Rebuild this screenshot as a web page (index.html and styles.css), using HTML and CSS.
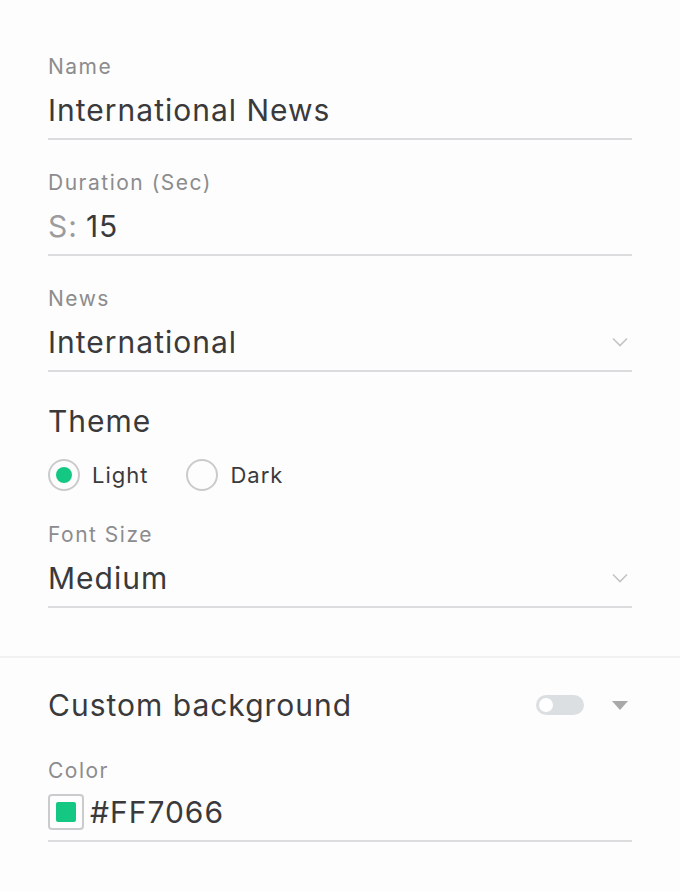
FILE: index.html
```html
<!doctype html>
<html>

<head>
    <title>Widget settings</title>
    <meta charset="utf-8">
    <link rel="stylesheet" href="styles.css">
</head>

<body>
    <section class="panel">
        <div class="field">
            <div class="label">Name</div>
            <div class="value">International News</div>
        </div>
        <div class="field">
            <div class="label">Duration (Sec)</div>
            <div class="value"><span class="prefix">S:</span>15</div>
        </div>
        <div class="field">
            <div class="label">News</div>
            <div class="value select">
                <span>International</span>
                <svg class="chevron" width="16" height="10" viewBox="0 0 16 10">
                    <path d="M1 1.5 L8 8.5 L15 1.5" fill="none" stroke="#c4c4c6" stroke-width="1.6"/>
                </svg>
            </div>
        </div>

        <div class="heading">Theme</div>
        <div class="radios">
            <label class="radio"><span class="dot on"></span>Light</label>
            <label class="radio"><span class="dot"></span>Dark</label>
        </div>

        <div class="field">
            <div class="label">Font Size</div>
            <div class="value select">
                <span>Medium</span>
                <svg class="chevron" width="16" height="10" viewBox="0 0 16 10">
                    <path d="M1 1.5 L8 8.5 L15 1.5" fill="none" stroke="#c4c4c6" stroke-width="1.6"/>
                </svg>
            </div>
        </div>
    </section>

    <div class="divider"></div>

    <section class="panel">
        <div class="heading custom">
            <span>Custom background</span>
            <div class="tools">
                <span class="toggle"><span class="knob"></span></span>
                <span class="caret"></span>
            </div>
        </div>
        <div class="field color">
            <div class="label">Color</div>
            <div class="value"><span class="swatch"><span></span></span>#FF7066</div>
        </div>
    </section>
</body>

</html>
```

FILE: styles.css
```css
body {
    margin: 0;
    background-color: #fdfdfd;
    font-family: Inter, "Noto Sans", sans-serif;
    color: #3a3a3c;
}

.panel {
    padding: 24px 48px 0 48px;
}

.field {
    margin-top: 31px;
    border-bottom: 2px solid #dcdcde;
    padding-bottom: 8px;
}

.radios + .field {
    margin-top: 32px;
}

.field.color {
    margin-top: 34px;
}

.label {
    font-size: 21px;
    line-height: 24px;
    letter-spacing: 1.5px;
    color: #8c8c8e;
}

.value {
    margin-top: 11px;
    font-size: 30px;
    line-height: 40px;
    letter-spacing: 1px;
    display: flex;
    align-items: center;
}

.field.color .value {
    margin-top: 9px;
}

.prefix {
    color: #9c9c9e;
    margin-right: 8px;
}

.select {
    justify-content: space-between;
}

.chevron {
    margin-right: 4px;
}

.heading {
    margin-top: 29px;
    font-size: 30px;
    line-height: 40px;
    letter-spacing: 1px;
}

.radios {
    margin-top: 18px;
    display: flex;
    gap: 38px;
    font-size: 22px;
    line-height: 32px;
    letter-spacing: 1px;
}

.radio {
    display: flex;
    align-items: center;
    gap: 12px;
}

.dot {
    width: 28px;
    height: 28px;
    border: 2px solid #cbcbcd;
    border-radius: 50%;
    display: flex;
    align-items: center;
    justify-content: center;
}

.dot.on::after {
    content: "";
    width: 16px;
    height: 16px;
    border-radius: 50%;
    background-color: #14c884;
}

.divider {
    margin-top: 48px;
    height: 2px;
    background-color: #f1f1f2;
}

.panel .custom {
    margin-top: 3px;
    display: flex;
    justify-content: space-between;
    align-items: center;
}

.tools {
    display: flex;
    align-items: center;
    gap: 28px;
    margin-right: 4px;
}

.toggle {
    width: 48px;
    height: 20px;
    border-radius: 10px;
    background-color: #dcdfe2;
    display: flex;
    align-items: center;
    padding-left: 3px;
    box-sizing: border-box;
}

.knob {
    width: 14px;
    height: 14px;
    border-radius: 50%;
    background-color: #ffffff;
}

.caret {
    width: 0;
    height: 0;
    border-left: 8px solid transparent;
    border-right: 8px solid transparent;
    border-top: 9px solid #a9a9ab;
}

.swatch {
    width: 32px;
    height: 32px;
    border: 2px solid #cbcbcd;
    border-radius: 4px;
    display: flex;
    align-items: center;
    justify-content: center;
    margin-right: 6px;
}

.swatch span {
    width: 20px;
    height: 20px;
    border-radius: 2px;
    background-color: #14c884;
}
```
